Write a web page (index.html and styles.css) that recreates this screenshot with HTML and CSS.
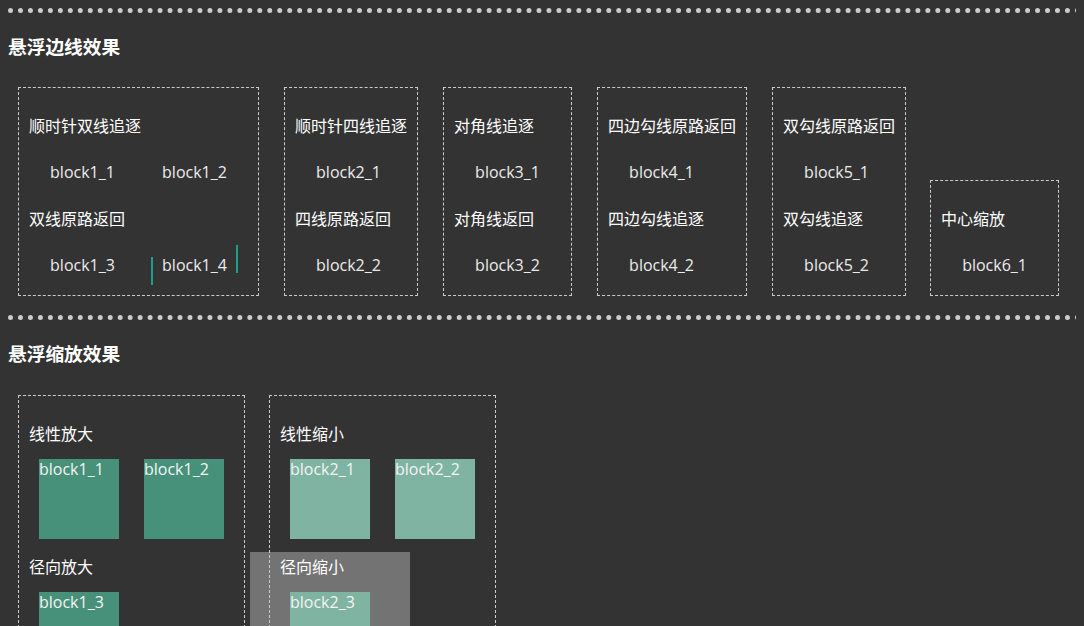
FILE: index.html
```html
<!DOCTYPE html>
<html lang="zh-CN">
<head>
<meta charset="utf-8">
<title>悬浮效果</title>
<link rel="stylesheet" href="styles.css">
</head>
<body>
  <div class="sep"></div>
  <h3 class="title">悬浮边线效果</h3>
  <div class="row row-border">
    <div class="box">
      <p class="label">顺时针双线追逐</p>
      <div class="blocks">
        <div class="blk">block1_1</div>
        <div class="blk">block1_2</div>
      </div>
      <p class="label">双线原路返回</p>
      <div class="blocks">
        <div class="blk">block1_3</div>
        <div class="blk chase">block1_4</div>
      </div>
    </div>
    <div class="box">
      <p class="label">顺时针四线追逐</p>
      <div class="blocks"><div class="blk">block2_1</div></div>
      <p class="label">四线原路返回</p>
      <div class="blocks"><div class="blk">block2_2</div></div>
    </div>
    <div class="box">
      <p class="label">对角线追逐</p>
      <div class="blocks"><div class="blk">block3_1</div></div>
      <p class="label">对角线返回</p>
      <div class="blocks"><div class="blk">block3_2</div></div>
    </div>
    <div class="box">
      <p class="label">四边勾线原路返回</p>
      <div class="blocks"><div class="blk">block4_1</div></div>
      <p class="label">四边勾线追逐</p>
      <div class="blocks"><div class="blk">block4_2</div></div>
    </div>
    <div class="box">
      <p class="label">双勾线原路返回</p>
      <div class="blocks"><div class="blk">block5_1</div></div>
      <p class="label">双勾线追逐</p>
      <div class="blocks"><div class="blk">block5_2</div></div>
    </div>
    <div class="box box-tight">
      <p class="label">中心缩放</p>
      <div class="blocks"><div class="blk">block6_1</div></div>
    </div>
  </div>

  <div class="sep"></div>
  <h3 class="title">悬浮缩放效果</h3>
  <div class="row row-scale">
    <div class="box">
      <p class="label label-top">线性放大</p>
      <div class="blocks">
        <div class="sq sq-dark">block1_1</div>
        <div class="sq sq-dark">block1_2</div>
      </div>
      <p class="label label-sq">径向放大</p>
      <div class="blocks">
        <div class="sq sq-dark">block1_3</div>
      </div>
    </div>
    <div class="box">
      <p class="label label-top">线性缩小</p>
      <div class="blocks">
        <div class="sq sq-light">block2_1</div>
        <div class="sq sq-light">block2_2</div>
      </div>
      <p class="label label-sq">径向缩小</p>
      <div class="blocks">
        <div class="sq sq-light radial">block2_3</div>
      </div>
    </div>
  </div>
</body>
</html>
```

FILE: styles.css
```css
html {
  background: #333333;
  overflow: hidden;
}

body {
  margin: 8px;
  color: #ffffff;
  font-family: "Noto Sans CJK SC", "Open Sans", sans-serif;
}

.sep {
  width: calc(100% + 5px);
  border-top: 5px dotted #cccccc;
}

.title {
  margin: 20px 0 28px;
  font-size: 18.72px;
  line-height: 26px;
  font-weight: bold;
  color: #ffffff;
}

.row {
  display: flex;
  align-items: flex-end;
  gap: 25px;
  margin-left: 10px;
}

.row-border {
  margin-bottom: 19px;
}

.row-scale {
  gap: 24px;
  padding-top: 1px;
}

.box {
  border: 1px dashed #cccccc;
  padding: 11px 10px 10px;
}

.box-tight {
  margin-left: -1px;
}

.label {
  margin: 14px 0 15px;
  font-size: 16px;
  line-height: 24px;
  white-space: nowrap;
  color: #ffffff;
}

.label-top {
  margin-bottom: 14px;
}

.label-sq {
  margin: 15px 0 14px;
}

.blocks {
  display: flex;
  gap: 25px;
  padding: 0 10px;
}

.blk {
  position: relative;
  width: 87px;
  height: 40px;
  line-height: 40px;
  text-align: center;
  font-family: "Open Sans", "Noto Sans CJK SC", sans-serif;
  font-size: 16px;
  color: #ececec;
}

.chase::before,
.chase::after {
  content: "";
  position: absolute;
  width: 2px;
  height: 28px;
  background: #1f9c8b;
}

.chase::before {
  left: 0;
  bottom: 0;
}

.chase::after {
  right: 0;
  top: 0;
}

.sq {
  position: relative;
  width: 80px;
  height: 80px;
  line-height: 20px;
  font-family: "Open Sans", "Noto Sans CJK SC", sans-serif;
  font-size: 16px;
  color: #f4f4f4;
}

.sq-dark {
  background: #47917a;
}

.sq-light {
  background: #7fb3a2;
}

.radial::before {
  content: "";
  position: absolute;
  inset: 0;
  background: #737373;
  transform: scale(2);
  z-index: -1;
}
```
